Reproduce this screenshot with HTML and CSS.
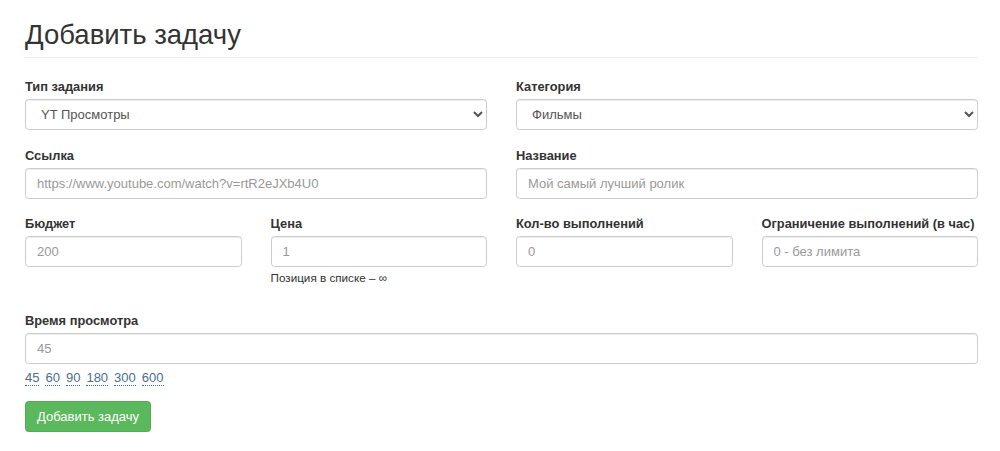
FILE: index.html
```html
<!DOCTYPE html>
<html lang="ru">
<head>
<meta charset="utf-8">
<title>Добавить задачу</title>
<link rel="stylesheet" href="styles.css">
</head>
<body>
<div class="container">
  <h1 class="page-title">Добавить задачу</h1>
  <form class="task-form">
    <div class="row two">
      <div class="group">
        <label class="label">Тип задания</label>
        <select class="control select"><option>YT Просмотры</option></select>
      </div>
      <div class="group">
        <label class="label">Категория</label>
        <select class="control select"><option>Фильмы</option></select>
      </div>
    </div>
    <div class="row two">
      <div class="group">
        <label class="label">Ссылка</label>
        <input class="control" type="text" placeholder="https://www.youtube.com/watch?v=rtR2eJXb4U0">
      </div>
      <div class="group">
        <label class="label">Название</label>
        <input class="control" type="text" placeholder="Мой самый лучший ролик">
      </div>
    </div>
    <div class="row four">
      <div class="group">
        <label class="label">Бюджет</label>
        <input class="control" type="text" placeholder="200">
      </div>
      <div class="group">
        <label class="label">Цена</label>
        <input class="control" type="text" placeholder="1">
        <div class="help">Позиция в списке – ∞</div>
      </div>
      <div class="group">
        <label class="label">Кол-во выполнений</label>
        <input class="control" type="text" placeholder="0">
      </div>
      <div class="group">
        <label class="label">Ограничение выполнений (в час)</label>
        <input class="control" type="text" placeholder="0 - без лимита">
      </div>
    </div>
    <div class="group last">
      <label class="label">Время просмотра</label>
      <input class="control" type="text" placeholder="45">
      <div class="presets">
        <span class="preset">45</span>
        <span class="preset">60</span>
        <span class="preset">90</span>
        <span class="preset">180</span>
        <span class="preset">300</span>
        <span class="preset">600</span>
      </div>
    </div>
    <button type="button" class="btn-success">Добавить задачу</button>
  </form>
</div>
</body>
</html>
```

FILE: styles.css
```css
* { box-sizing: border-box; }

body {
  margin: 0;
  background: #fff;
  color: #333;
  font-family: "Liberation Sans", Arial, Helvetica, sans-serif;
  font-size: 13px;
}

.container {
  width: 953px;
  margin-left: 25px;
}

.page-title {
  margin: 19px 0 20px;
  padding-bottom: 6px;
  border-bottom: 1px solid #eee;
  font-size: 27.5px;
  line-height: 32px;
  font-weight: 500;
  color: #333;
}

.row {
  display: grid;
  column-gap: 29px;
}
.row.two { grid-template-columns: 1fr 1fr; }
.row.four { grid-template-columns: 1fr 1fr 1fr 1fr; }

.group {
  margin-bottom: 17px;
}
.row.two + .row.four .group { margin-bottom: 17px; }
.row.two + .row.two { margin-top: 0; }
.row.four { margin-top: -1px; }

.label {
  display: block;
  font-weight: bold;
  font-size: 12.85px;
  line-height: 18px;
  margin-bottom: 3px;
  color: #333;
}

.control {
  display: block;
  width: 100%;
  height: 31px;
  padding: 5px 11px;
  font-family: "Liberation Sans", Arial, Helvetica, sans-serif;
  font-size: 13px;
  color: #555;
  background: #fff;
  border: 1px solid #ccc;
  border-radius: 3.6px;
  box-shadow: inset 0 1px 1px rgba(0,0,0,.075);
  outline: none;
}
.control::placeholder { color: #999; }

.select {
  padding: 5px 11px;
}

.help {
  margin-top: 3px;
  margin-bottom: 10px;
  font-size: 11.7px;
  line-height: 15px;
  color: #333;
}

.presets {
  display: flex;
  gap: 6px;
  margin-top: 6px;
  line-height: 16px;
}
.preset {
  color: #4a6f93;
  border-bottom: 1px dotted #4a6f93;
  font-size: 13px;
  line-height: 15px;
}

.group.last { margin-bottom: 15px; }

.btn-success {
  display: block;
  height: 31px;
  padding: 0 11px;
  font-family: "Liberation Sans", Arial, Helvetica, sans-serif;
  font-size: 13px;
  color: #fff;
  background: #5cb85c;
  border: 1px solid #4cae4c;
  border-radius: 3.6px;
}
```
